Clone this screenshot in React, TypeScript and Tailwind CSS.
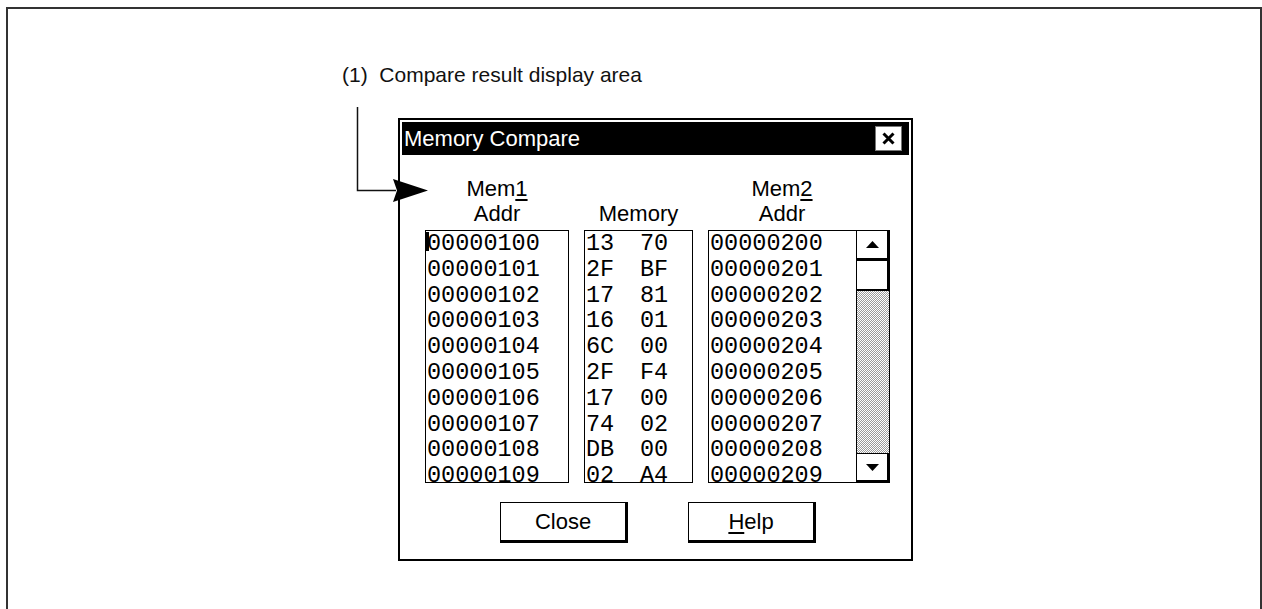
import React from 'react';

const mem1 = ['00000100', '00000101', '00000102', '00000103', '00000104', '00000105', '00000106', '00000107', '00000108', '00000109'];
const mem2 = ['00000200', '00000201', '00000202', '00000203', '00000204', '00000205', '00000206', '00000207', '00000208', '00000209'];
const bytes: [string, string][] = [
  ['13', '70'],
  ['2F', 'BF'],
  ['17', '81'],
  ['16', '01'],
  ['6C', '00'],
  ['2F', 'F4'],
  ['17', '00'],
  ['74', '02'],
  ['DB', '00'],
  ['02', 'A4'],
];

function ScrollArrow({ down }: { down?: boolean }) {
  return (
    <svg width="13" height="7" viewBox="0 0 13 7" aria-hidden>
      {down ? <polygon points="0,0 13,0 6.5,7" fill="#000" /> : <polygon points="0,7 13,7 6.5,0" fill="#000" />}
    </svg>
  );
}

function Scrollbar() {
  return (
    <div className="flex w-[33px] shrink-0 flex-col border-l border-black">
      <div className="flex h-[30px] items-center justify-center border-r-2 border-b-[3px] border-black bg-white">
        <ScrollArrow />
      </div>
      <div className="h-[30px] border-r-2 border-b-2 border-black bg-white" />
      <div className="flex-1 bg-[repeating-conic-gradient(#9a9a9a_0_25%,#ffffff_0_50%)] bg-[length:2px_2px]" />
      <div className="flex h-[29px] items-center justify-center border-t border-r-2 border-b-2 border-black bg-white">
        <ScrollArrow down />
      </div>
    </div>
  );
}

function DlgButton({ children }: { children: React.ReactNode }) {
  return (
    <button
      type="button"
      className="flex h-[41px] w-[128px] items-center justify-center border border-r-[3px] border-b-[3px] border-black bg-white text-[22px] leading-none text-black"
    >
      {children}
    </button>
  );
}

export default function App() {
  return (
    <div className="relative h-[609px] w-[1262px] overflow-hidden bg-white pl-[6px] pt-[7px] font-['Liberation_Sans',Arial,sans-serif] text-black">
      <div className="h-[602px] w-[1256px] border-x-2 border-t-2 border-[#333]">
        <p className="mt-[54px] pl-[334px] text-[21px] leading-[24px] text-[#111]">(1)&nbsp; Compare result display area</p>

        {/* dialog */}
        <div className="ml-[390px] mt-[31px] flex h-[443px] w-[515px] flex-col border-2 border-black bg-white p-[2px]">
          <div className="flex h-[33px] shrink-0 items-center justify-between bg-black pl-[2px] pr-[7px]">
            <span className="text-[22px] leading-none text-white">Memory Compare</span>
            <div className="flex h-[25px] w-[27px] items-center justify-center border border-[#777] bg-white">
              <svg width="13" height="13" viewBox="0 0 13 13" aria-hidden>
                <path d="M1.5 1.5 L11.5 11.5 M11.5 1.5 L1.5 11.5" stroke="#000" strokeWidth="3" />
              </svg>
            </div>
          </div>

          <div className="flex flex-col pl-[23px] pt-[21px]">
            <div className="flex gap-[15px]">
              {/* Mem1 */}
              <div className="flex w-[144px] flex-col">
                <div className="text-center text-[22px] leading-[25px]">
                  Mem<span className="underline underline-offset-[3px]">1</span>
                </div>
                <div className="text-center text-[22px] leading-[25px]">Addr</div>
                <div className="relative mt-[4px] h-[253px] overflow-hidden border border-black pl-[1px] font-['Liberation_Mono',monospace] text-[23.5px] leading-[25.8px]">
                  {mem1.map((a) => (
                    <div key={a}>{a}</div>
                  ))}
                  <div className="absolute left-0 top-[1px] h-[19px] w-[3px] bg-black" />
                </div>
              </div>

              {/* Memory */}
              <div className="flex w-[109px] flex-col">
                <div className="h-[25px]" />
                <div className="text-center text-[22px] leading-[25px]">Memory</div>
                <div className="mt-[4px] h-[253px] overflow-hidden border border-black pl-[1px] font-['Liberation_Mono',monospace] text-[23.5px] leading-[25.8px]">
                  {bytes.map(([a, b], i) => (
                    <div key={i} className="flex">
                      <span className="w-[54px]">{a}</span>
                      <span>{b}</span>
                    </div>
                  ))}
                </div>
              </div>

              {/* Mem2 */}
              <div className="flex w-[182px] flex-col">
                <div className="w-[148px] text-center text-[22px] leading-[25px]">
                  Mem<span className="underline underline-offset-[3px]">2</span>
                </div>
                <div className="w-[148px] text-center text-[22px] leading-[25px]">Addr</div>
                <div className="mt-[4px] flex h-[253px] border border-black">
                  <div className="flex-1 overflow-hidden pl-[1px] font-['Liberation_Mono',monospace] text-[23.5px] leading-[25.8px]">
                    {mem2.map((a) => (
                      <div key={a}>{a}</div>
                    ))}
                  </div>
                  <Scrollbar />
                </div>
              </div>
            </div>

            <div className="mt-[19px] flex gap-[60px] pl-[75px]">
              <DlgButton>Close</DlgButton>
              <DlgButton>
                <span className="underline underline-offset-[3px]">H</span>elp
              </DlgButton>
            </div>
          </div>
        </div>
      </div>

      {/* callout arrow */}
      <svg className="pointer-events-none absolute left-0 top-0" width="1262" height="609" aria-hidden>
        <path d="M357.5 107 V190.5 H396" fill="none" stroke="#111" strokeWidth="1.5" />
        <polygon points="393,179 428,190.5 393,202 397,190.5" fill="#000" />
      </svg>
    </div>
  );
}
